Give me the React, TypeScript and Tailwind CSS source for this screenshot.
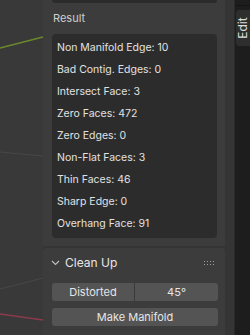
import React from 'react';

const rows = [
  'Non Manifold Edge: 10',
  'Bad Contig. Edges: 0',
  'Intersect Face: 3',
  'Zero Faces: 472',
  'Zero Edges: 0',
  'Non-Flat Faces: 3',
  'Thin Faces: 46',
  'Sharp Edge: 0',
  'Overhang Face: 91',
];

function Viewport() {
  return (
    <div className="relative w-[43px] shrink-0 bg-[#393939]">
      <svg width="43" height="335" className="absolute inset-0">
        <line x1="0" y1="48" x2="43" y2="37" stroke="#6c8a2c" strokeWidth="1.5" />
        <line x1="0" y1="152" x2="43" y2="156" stroke="#474747" strokeWidth="1" />
        <line x1="0" y1="289" x2="43" y2="278" stroke="#474747" strokeWidth="1" />
        <line x1="0" y1="314" x2="43" y2="320" stroke="#8c3a4c" strokeWidth="1.5" />
      </svg>
    </div>
  );
}

function DragDots() {
  return (
    <div className="grid grid-cols-4 gap-x-[2px] gap-y-[2px]">
      {Array.from({ length: 8 }).map((_, i) => (
        <span key={i} className="block h-[1px] w-[1px] bg-[#a0a0a0]" />
      ))}
    </div>
  );
}

export default function App() {
  return (
    <div
      className="flex h-[335px] w-[250px] overflow-hidden bg-[#393939] text-[10.5px] text-[#e2e2e2]"
      style={{ fontFamily: 'Inter, "DejaVu Sans", sans-serif' }}
    >
      <Viewport />

      {/* sidebar region */}
      <div className="flex w-[191px] shrink-0 flex-col gap-[2px] bg-[#353535] pr-[9px]">
        {/* analysis panel */}
        <div className="flex h-[246px] flex-col bg-[#3c3c3c] pl-[9px] pr-[8px]">
          <div className="h-[3px] rounded-b-[4px] bg-[#2b2b2b]" />
          <div className="mt-[7px] h-[16px] pl-[1px] text-[11px] leading-[16px] text-[#cfcfcf]">Result</div>
          <div className="mt-[8px] flex flex-col rounded-[4px] bg-[#2c2c2c] py-[3px] pl-[5px]">
            {rows.map((r) => (
              <div key={r} className="h-[22px] leading-[22px]">
                {r}
              </div>
            ))}
          </div>
        </div>

        {/* clean up panel */}
        <div className="flex flex-1 flex-col rounded-t-[4px] bg-[#3c3c3c] pl-[9px] pr-[7px]">
          <div className="flex h-[27px] items-center pt-[2px]">
            <svg width="9" height="6" viewBox="0 0 9 6" className="ml-[-1px] mr-[5px]">
              <path d="M1 1 L4.5 4.5 L8 1" fill="none" stroke="#bdbdbd" strokeWidth="1.2" />
            </svg>
            <span className="text-[12px] text-[#e6e6e6]">Clean Up</span>
            <div className="ml-auto mr-[4px]">
              <DragDots />
            </div>
          </div>
          <div className="mt-[8px] flex h-[18px] overflow-hidden rounded-[3px] text-[11px] text-[#e6e6e6]">
            <div className="flex w-[82px] items-center justify-center bg-[#545454]">Distorted</div>
            <div className="w-[1px] bg-[#3a3a3a]" />
            <div className="flex flex-1 items-center justify-center bg-[#545454]">45°</div>
          </div>
          <div className="mt-[7px] flex h-[18px] items-center justify-center rounded-[3px] bg-[#545454] text-[11px] text-[#e6e6e6]">
            Make Manifold
          </div>
        </div>
      </div>

      {/* tabs */}
      <div className="flex w-[16px] shrink-0 flex-col border-l border-[#2a2a2a] bg-[#1d1d1d] pt-[5px]">
        <div className="h-[1px] bg-[#141414]" />
        <div className="ml-[1px] mt-[4px] flex h-[36px] items-center justify-center rounded-l-[3px] bg-[#2e2e2e]">
          <span className="block -rotate-90 whitespace-nowrap text-[12px] text-[#dcdcdc]">Edit</span>
        </div>
      </div>
    </div>
  );
}
